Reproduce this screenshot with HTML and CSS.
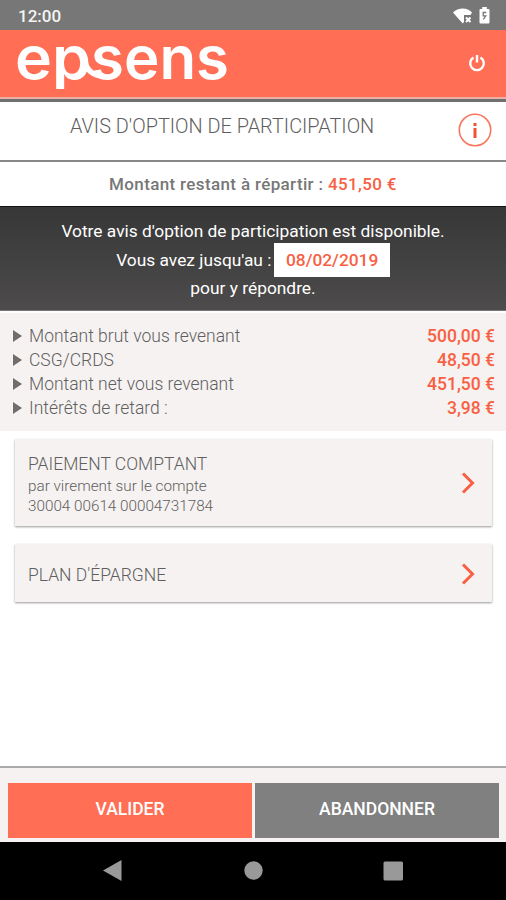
FILE: index.html
```html
<!DOCTYPE html>
<html lang="fr">
<head>
    <meta charset="UTF-8">
    <meta name="viewport" content="width=device-width, initial-scale=1.0">
    <title>Avis d'option de participation</title>
    <link rel="stylesheet" href="styles.css">
</head>
<body>

<!-- Status bar -->
<div class="status">
    <span class="time">12:00</span>
    <svg class="wifi" width="20" height="16" viewBox="0 0 20 16">
        <path d="M0 4.500C5-1 14.500-1 19 4.500L17.500 7H11V14L9.700 15.500Z" fill="#fff"/>
        <path d="M13 9.500L17.500 14M17.500 9.500L13 14" stroke="#fff" stroke-width="2"/>
    </svg>
    <svg class="battery" width="11" height="17" viewBox="0 0 11 17">
        <path d="M3.200 0H7.800V2H9.500Q10.500 2 10.500 3V15.500Q10.500 16.500 9.500 16.500H1.500Q.5 16.500 .5 15.500V3Q.5 2 1.500 2H3.200Z" fill="#fff"/>
        <path d="M7.300 5.500H4.200V8.800H6.800L4.300 12.500" stroke="#777" stroke-width="1.300" fill="none"/>
    </svg>
</div>

<!-- Header -->
<header class="header">
    <svg class="logo" width="214" height="50" viewBox="0 0 214 50">
        <text x="-1" y="40" textLength="76" lengthAdjust="spacingAndGlyphs">ep</text>
        <text x="75" y="40" textLength="138" lengthAdjust="spacingAndGlyphs">sens</text>
        <path d="M69 23Q72 36 88 37.500" stroke="#fff" stroke-width="5.500" fill="none"/>
    </svg>
    <svg class="power" width="18" height="18" viewBox="0 0 18 18">
        <path d="M5.500 3.500A6.800 6.800 0 1 0 12.500 3.500M9 1V8.500" stroke="#fff" stroke-width="2.400" fill="none"/>
    </svg>
</header>

<div class="title">
    <h1>AVIS D'OPTION DE PARTICIPATION</h1>
    <svg class="info" width="34" height="34" viewBox="0 0 34 34">
        <circle cx="17" cy="17" r="15.700" fill="none" stroke="#f9755d" stroke-width="1.600"/>
        <path d="M15.500 10H18.500V13H15.500ZM15.500 15H18.500V25H15.500Z" fill="#f0532f"/>
    </svg>
</div>

<div class="remaining"><span>Montant restant à répartir :</span> <b>451,50 €</b></div>

<!-- Deadline -->
<div class="notice">
    <div class="line">Votre avis d'option de participation est disponible.</div>
    <div class="line"><span>Vous avez jusqu'au :</span><span class="date">08/02/2019</span></div>
    <div class="line">pour y répondre.</div>
</div>

<ul class="summary">
    <li><span>Montant brut vous revenant</span><b>500,00 €</b></li>
    <li><span>CSG/CRDS</span><b>48,50 €</b></li>
    <li><span>Montant net vous revenant</span><b>451,50 €</b></li>
    <li><span>Intérêts de retard :</span><b>3,98 €</b></li>
</ul>

<!-- Choices -->
<main class="choices">
    <div class="card cash">
        <div>
            <h2>PAIEMENT COMPTANT</h2>
            <p>par virement sur le compte</p>
            <p>30004 00614 00004731784</p>
        </div>
        <svg width="14" height="24" viewBox="0 0 14 24"><path d="M2 2.500L11.500 12L2 21.500"/></svg>
    </div>
    <div class="card plan">
        <h2>PLAN D'ÉPARGNE</h2>
        <svg width="14" height="24" viewBox="0 0 14 24"><path d="M2 3.500L11.500 13L2 22.500"/></svg>
    </div>
</main>

<footer class="actions">
    <button class="validate">VALIDER</button>
    <button class="cancel">ABANDONNER</button>
</footer>

<!-- Android navigation -->
<nav class="nav">
    <svg width="506" height="58" viewBox="0 0 506 58" fill="#999">
        <path d="M103 28.500L121.500 18V39Z"/>
        <circle cx="253.500" cy="28.500" r="9.200"/>
        <rect x="383.500" y="19.500" width="19.500" height="19" rx="1.500"/>
    </svg>
</nav>

</body>
</html>
```
FILE: styles.css
```css
* {
    box-sizing: border-box;
}
body {
    margin: 0;
    height: 900px;
    display: flex;
    flex-direction: column;
    font-family: Roboto, sans-serif;
    color: #777;
    background: #fff;
    overflow: hidden;
}
h1, h2, p, ul {
    margin: 0;
    padding: 0;
    font-weight: 300;
}

.status {
    height: 30px;
    background: #777;
    display: flex;
    align-items: center;
    padding: 1px 16px 0 18px;
}
.time {
    flex: 1;
    color: #f4f4f4;
    font-size: 17px;
    font-weight: 500;
    line-height: 30px;
}
.battery {
    margin-left: 6px;
}

.header {
    height: 72px;
    background: #ff6e55;
    border-bottom: 3px solid #6f706f;
    box-shadow: inset 0 -2px #eeb0a5;
    display: flex;
    justify-content: space-between;
    padding: 9px 20px 0 16px;
}
.logo {
    overflow: visible;
    clip-path: inset(0);
}
.logo text {
    font-family: Inter, sans-serif;
    font-size: 59px;
    font-weight: 600;
    fill: #fff;
}
.power {
    margin-top: 15px;
}

.title {
    height: 60px;
    border-bottom: 2px solid #888;
    display: flex;
    justify-content: space-between;
    padding: 11px 14px 0 70px;
}
h1 {
    font-size: 19.9px;
    line-height: 27px;
    color: #5f5f5f;
}

.remaining {
    height: 44px;
    line-height: 45px;
    font-size: 17px;
    font-weight: 500;
    letter-spacing: .36px;
    text-align: center;
    white-space: nowrap;
}
b {
    font-weight: 500;
    color: #f95f43;
}

.notice {
    height: 105px;
    padding-top: 10px;
    color: #fff;
    background: linear-gradient(#373737, #4d4b4b);
    border-top: 1px solid #111;
    border-bottom: 1px solid #777;
    font-size: 17.35px;
    text-align: center;
    white-space: nowrap;
}
.line {
    height: 28.5px;
    line-height: 28px;
    display: flex;
    justify-content: center;
    align-items: center;
}
.date {
    margin-left: 3px;
    padding: 0 11.5px;
    height: 34px;
    line-height: 34px;
    font-weight: 500;
    color: #f95f43;
    background: #fff;
}

.summary {
    height: 118px;
    margin-top: 2px;
    padding: 11px 11px 0 13px;
    background: #f6f2f1;
    list-style: none;
    font-size: 17.5px;
}
.summary li {
    display: flex;
    align-items: center;
    height: 24px;
    line-height: 24px;
}
.summary li::before {
    content: "";
    margin: 0 7px 1px 0;
    border-left: 9px solid #706d6c;
    border-top: 6px solid transparent;
    border-bottom: 6px solid transparent;
}
.summary span {
    flex: 1;
    font-weight: 300;
    color: #5f5f5f;
}

.choices {
    flex: 1;
    padding: 8px 14px 0 15px;
}
.card {
    display: flex;
    align-items: center;
    justify-content: space-between;
    padding: 0 17px 0 13px;
    background: #f6f2f1;
    box-shadow: 0 1px 2px rgba(0, 0, 0, .4);
    color: #5f5f5f;
}
.cash {
    height: 87px;
    margin-bottom: 18px;
}
.cash div {
    padding-top: 3px;
}
.plan {
    height: 58px;
}
.card h2 {
    font-size: 17.5px;
    line-height: 24px;
}
.plan h2 {
    padding-top: 4px;
}
.card p {
    font-size: 15.25px;
    line-height: 20px;
}
.card path {
    fill: none;
    stroke: #f95f43;
    stroke-width: 3;
}

.actions {
    height: 76px;
    padding: 15px 7px 4px 8px;
    background: #f6f2f1;
    border-top: 2px solid #aaa;
    display: flex;
    gap: 3px;
}
.actions button {
    flex: 1;
    padding: 0 0 3px;
    border: none;
    color: #fff;
    font-family: inherit;
    font-size: 17.5px;
    font-weight: 500;
}
.validate {
    background: #ff6e55;
}
.cancel {
    background: #808080;
}

.nav {
    height: 58px;
    background: #000;
}
```
